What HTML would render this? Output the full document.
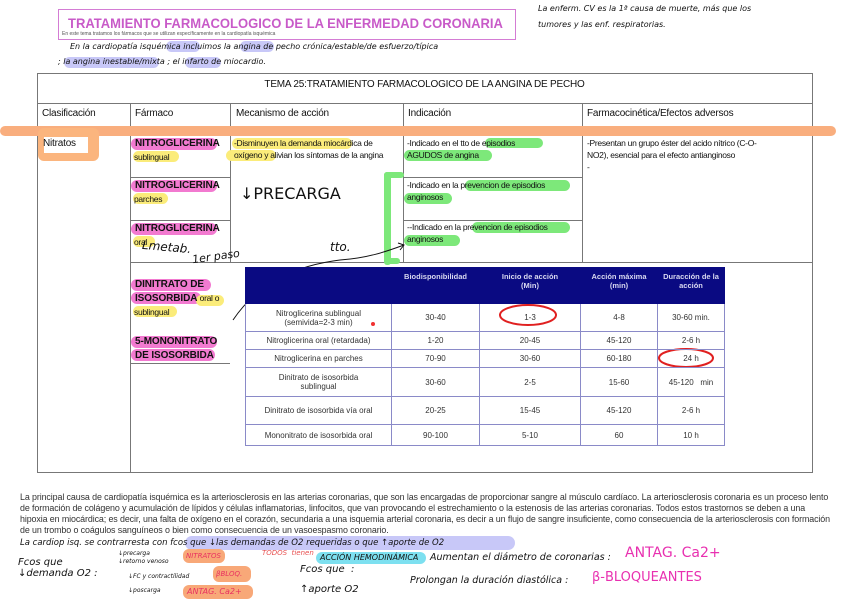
<!DOCTYPE html>
<html><head><meta charset="utf-8"><style>
body{margin:0;width:848px;height:599px;background:#fff;position:relative;overflow:hidden;font-family:"Liberation Sans",sans-serif;}
.a{position:absolute;}
.hw{font-family:"DejaVu Sans",sans-serif;font-style:italic;color:#111;}
.hl{position:absolute;border-radius:6px;}
.c{font-family:"Liberation Sans",sans-serif;font-size:10px;color:#111;letter-spacing:-0.2px;}
.s{font-size:8.5px;letter-spacing:-0.3px;}
.b{font-weight:bold;font-size:10px;letter-spacing:-0.1px;}
table.t{position:absolute;left:245px;top:267px;width:480px;height:178px;border-collapse:collapse;font-size:8px;color:#333;text-align:center;}
table.t td{border:1px solid #8a8ac8;padding:0 2px;}
table.t tr.h td{background:#0a0a82;color:#d8d8f0;font-weight:bold;font-size:7.5px;vertical-align:top;padding-top:4px;border-color:#0a0a82;}
</style></head><body>
<div class="a" style="left:58px;top:9px;width:456px;height:29px;border:1.5px solid #d47cd4;"></div>
<div class="a" style="left:68px;top:15px;font-size:14px;font-weight:bold;color:#c85ac8;transform:scaleX(0.93);transform-origin:left;white-space:nowrap;">TRATAMIENTO FARMACOLOGICO DE LA ENFERMEDAD CORONARIA</div>
<div class="a" style="left:62px;top:31px;font-size:5px;color:#555;">En este tema tratamos los fármacos que se utilizan específicamente en la cardiopatía isquémica</div>
<div class="a hw" style="left:538px;top:4px;font-size:8px;">La enferm. CV es la 1ª causa de muerte, más que los</div>
<div class="a hw" style="left:538px;top:20px;font-size:8px;">tumores y las enf. respiratorias.</div>
<div class="hl" style="left:166px;top:41px;width:34px;height:11px;background:#c8c8f8;"></div>
<div class="hl" style="left:240px;top:41px;width:34px;height:11px;background:#c8c8f8;"></div>
<div class="hl" style="left:64px;top:57px;width:95px;height:11px;background:#c8c8f8;"></div>
<div class="hl" style="left:185px;top:57px;width:36px;height:11px;background:#c8c8f8;"></div>
<div class="a hw" style="left:70px;top:42px;font-size:8px;">En la cardiopatía isquémica incluimos la angina de pecho crónica/estable/de esfuerzo/típica</div>
<div class="a hw" style="left:58px;top:57px;font-size:8px;">; la angina inestable/mixta ; el infarto de miocardio.</div>

<div class="a" style="left:37px;top:73px;width:774px;height:398px;border:1px solid #777;"></div>
<div class="a" style="left:37px;top:103px;width:775px;height:1px;background:#777;"></div>
<div class="a c" style="left:37px;top:79px;width:775px;text-align:center;">TEMA 25:TRATAMIENTO FARMACOLOGICO DE LA ANGINA DE PECHO</div>
<div class="a" style="left:130px;top:103px;width:1px;height:369px;background:#777;"></div>
<div class="a" style="left:230px;top:103px;width:1px;height:160px;background:#777;"></div>
<div class="a" style="left:403px;top:103px;width:1px;height:160px;background:#777;"></div>
<div class="a" style="left:582px;top:103px;width:1px;height:160px;background:#777;"></div>
<div class="a" style="left:230px;top:262px;width:582px;height:1px;background:#777;"></div>
<div class="a" style="left:130px;top:177px;width:100px;height:1px;background:#777;"></div>
<div class="a" style="left:130px;top:220px;width:100px;height:1px;background:#777;"></div>
<div class="a" style="left:130px;top:262px;width:100px;height:1px;background:#777;"></div>
<div class="a" style="left:130px;top:363px;width:100px;height:1px;background:#777;"></div>
<div class="a" style="left:403px;top:177px;width:179px;height:1px;background:#777;"></div>
<div class="a" style="left:403px;top:220px;width:179px;height:1px;background:#777;"></div>
<div class="a c" style="left:42px;top:108px;">Clasificación</div>
<div class="a c" style="left:135px;top:108px;">Fármaco</div>
<div class="a c" style="left:236px;top:108px;">Mecanismo de acción</div>
<div class="a c" style="left:408px;top:108px;">Indicación</div>
<div class="a c" style="left:587px;top:108px;">Farmacocinética/Efectos adversos</div>
<div class="a" style="left:0;top:126px;width:836px;height:10px;background:#f9ae7e;border-radius:5px;"></div>
<div class="a" style="left:38px;top:128px;width:61px;height:33px;background:#fbb57e;border-radius:6px;"></div>
<div class="a" style="left:44px;top:137px;width:44px;height:16px;background:#fff;"></div>
<div class="a c" style="left:43px;top:138px;">Nitratos</div>

<div class="hl" style="left:131px;top:138px;width:86px;height:12px;background:#f27ad0;"></div>
<div class="hl" style="left:133px;top:151px;width:46px;height:11px;background:#fbec7a;"></div>
<div class="a c b" style="left:135px;top:138px;">NITROGLICERINA</div>
<div class="a c s" style="left:134px;top:152px;">sublingual</div>
<div class="hl" style="left:131px;top:180px;width:86px;height:12px;background:#f27ad0;"></div>
<div class="hl" style="left:133px;top:193px;width:35px;height:11px;background:#fbec7a;"></div>
<div class="a c b" style="left:135px;top:180px;">NITROGLICERINA</div>
<div class="a c s" style="left:134px;top:194px;">parches</div>
<div class="hl" style="left:131px;top:223px;width:86px;height:12px;background:#f27ad0;"></div>
<div class="hl" style="left:133px;top:236px;width:22px;height:11px;background:#fbec7a;"></div>
<div class="a c b" style="left:135px;top:223px;">NITROGLICERINA</div>
<div class="a c s" style="left:134px;top:237px;">oral</div>
<div class="a hw" style="left:142px;top:240px;font-size:12px;transform:rotate(5deg);">Lmetab.</div>
<div class="a hw" style="left:192px;top:250px;font-size:11px;transform:rotate(-8deg);">1er paso</div>
<div class="a hw" style="left:330px;top:240px;font-size:12px;">tto.</div>
<div class="hl" style="left:131px;top:279px;width:80px;height:12px;background:#f27ad0;"></div>
<div class="hl" style="left:131px;top:292px;width:70px;height:12px;background:#f27ad0;"></div>
<div class="hl" style="left:196px;top:295px;width:28px;height:11px;background:#fbec7a;"></div>
<div class="hl" style="left:133px;top:306px;width:44px;height:11px;background:#fbec7a;"></div>
<div class="a c b" style="left:135px;top:279px;">DINITRATO DE</div>
<div class="a c b" style="left:135px;top:293px;">ISOSORBIDA <span class="s" style="font-weight:normal">oral o</span></div>
<div class="a c s" style="left:134px;top:307px;">sublingual</div>
<div class="hl" style="left:131px;top:336px;width:86px;height:12px;background:#f27ad0;"></div>
<div class="hl" style="left:131px;top:349px;width:84px;height:12px;background:#f27ad0;"></div>
<div class="a c b" style="left:135px;top:336px;">5-MONONITRATO</div>
<div class="a c b" style="left:135px;top:350px;">DE ISOSORBIDA</div>

<div class="hl" style="left:232px;top:138px;width:120px;height:11px;background:#fbec7a;"></div>
<div class="hl" style="left:226px;top:150px;width:50px;height:11px;background:#fbec7a;"></div>
<div class="a c s" style="left:234px;top:137px;width:152px;line-height:12px;">-Disminuyen la demanda miocárdica de oxígeno y alivian los síntomas de la angina</div>
<div class="a hw" style="left:240px;top:184px;font-size:16px;font-style:normal;">↓PRECARGA</div>

<div class="hl" style="left:485px;top:138px;width:58px;height:10px;background:#7de87a;"></div>
<div class="hl" style="left:404px;top:150px;width:88px;height:11px;background:#7de87a;"></div>
<div class="a c s" style="left:407px;top:137px;width:140px;line-height:12px;">-Indicado en el tto de episodios AGUDOS de angina</div>
<div class="hl" style="left:465px;top:180px;width:105px;height:11px;background:#7de87a;"></div>
<div class="hl" style="left:404px;top:193px;width:48px;height:11px;background:#7de87a;"></div>
<div class="a c s" style="left:407px;top:179px;width:168px;line-height:12px;">-Indicado en la prevencion de episodios anginosos</div>
<div class="hl" style="left:472px;top:222px;width:98px;height:11px;background:#7de87a;"></div>
<div class="hl" style="left:404px;top:235px;width:56px;height:11px;background:#7de87a;"></div>
<div class="a c s" style="left:407px;top:221px;width:168px;line-height:12px;">--Indicado en la prevencion de episodios anginosos</div>
<div class="a" style="left:384px;top:172px;width:7px;height:93px;background:#7de87a;border-radius:3px;"></div>
<div class="a" style="left:384px;top:172px;width:20px;height:6px;background:#7de87a;border-radius:3px;"></div>
<div class="a" style="left:384px;top:258px;width:16px;height:6px;background:#7de87a;border-radius:3px;"></div>

<div class="a c s" style="left:587px;top:137px;width:190px;line-height:12px;">-Presentan un grupo éster del acido nítrico (C-O-NO2), esencial para el efecto antianginoso<br>-</div>

<svg class="a" style="left:0;top:0" width="848" height="599">
<path d="M233 320 C260 280 300 265 340 260 C370 258 390 250 404 245" stroke="#111" fill="none" stroke-width="1"/>
<path d="M398 243 L404 245 L400 250" stroke="#111" fill="none"/>
<ellipse cx="528" cy="315" rx="28" ry="10" stroke="#e02020" fill="none" stroke-width="2"/>
<ellipse cx="686" cy="358" rx="27" ry="9" stroke="#e02020" fill="none" stroke-width="2"/>
<circle cx="373" cy="324" r="2" fill="#f03030"/>
</svg>

<table class="t">
<tr class="h" style="height:36px"><td style="width:141px"></td><td style="width:83px">Biodisponibilidad</td><td style="width:96px">Inicio de acción<br>(Min)</td><td style="width:72px">Acción máxima<br>(min)</td><td>Duracción de la<br>acción</td></tr>
<tr style="height:28px"><td>Nitroglicerina sublingual<br>(semivida=2-3 min)</td><td>30-40</td><td>1-3</td><td>4-8</td><td>30-60 min.</td></tr>
<tr style="height:18px"><td>Nitroglicerina oral (retardada)</td><td>1-20</td><td>20-45</td><td>45-120</td><td>2-6 h</td></tr>
<tr style="height:18px"><td>Nitroglicerina en parches</td><td>70-90</td><td>30-60</td><td>60-180</td><td>24 h</td></tr>
<tr style="height:29px"><td>Dinitrato de isosorbida<br>sublingual</td><td>30-60</td><td>2-5</td><td>15-60</td><td>45-120 &nbsp; min</td></tr>
<tr style="height:28px"><td>Dinitrato de isosorbida vía oral</td><td>20-25</td><td>15-45</td><td>45-120</td><td>2-6 h</td></tr>
<tr style="height:21px"><td>Mononitrato de isosorbida oral</td><td>90-100</td><td>5-10</td><td>60</td><td>10 h</td></tr>
</table>

<div class="a" style="left:20px;top:492px;width:812px;font-size:8.9px;line-height:11px;color:#333;letter-spacing:-0.1px;">La principal causa de cardiopatía isquémica es la arteriosclerosis en las arterias coronarias, que son las encargadas de proporcionar sangre al músculo cardíaco. La arteriosclerosis coronaria es un proceso lento de formación de colágeno y acumulación de lípidos y células inflamatorias, linfocitos, que van provocando el estrechamiento o la estenosis de las arterias coronarias. Todos estos trastornos se deben a una hipoxia en miocárdica; es decir, una falta de oxígeno en el corazón, secundaria a una isquemia arterial coronaria, es decir a un flujo de sangre insuficiente, como consecuencia de la arteriosclerosis con formación de un trombo o coágulos sanguíneos o bien como consecuencia de un vasoespasmo coronario.</div>

<div class="hl" style="left:185px;top:536px;width:330px;height:14px;background:#c8c8f8;border-radius:7px;"></div>
<div class="a hw" style="left:20px;top:538px;font-size:8.5px;">La cardiop isq. se contrarresta con fcos que ↓las demandas de O2 requeridas o que ↑aporte de O2</div>
<div class="hl" style="left:316px;top:552px;width:110px;height:12px;background:#7de0f0;"></div>
<div class="a hw" style="left:262px;top:549px;font-size:7px;color:#e85050;">TODOS &nbsp;tienen</div>
<div class="a hw" style="left:320px;top:553px;font-size:8px;">ACCIÓN HEMODINÁMICA</div>
<div class="a hw" style="left:18px;top:557px;font-size:10px;">Fcos que<br>↓demanda O2 :</div>
<div class="a hw" style="left:118px;top:550px;font-size:6px;line-height:8px;">↓precarga<br>↓retorno venoso</div>
<div class="a hw" style="left:128px;top:573px;font-size:6px;">↓FC y contractilidad</div>
<div class="a hw" style="left:128px;top:587px;font-size:6px;">↓poscarga</div>
<div class="hl" style="left:183px;top:549px;width:42px;height:14px;background:#f8a878;"></div>
<div class="a hw" style="left:186px;top:552px;font-size:7px;color:#e83060;">NITRATOS</div>
<div class="hl" style="left:213px;top:566px;width:38px;height:16px;background:#f8a878;"></div>
<div class="a hw" style="left:216px;top:570px;font-size:7px;color:#e83060;">βBLOQ.</div>
<div class="hl" style="left:183px;top:585px;width:70px;height:14px;background:#f8a878;"></div>
<div class="a hw" style="left:187px;top:587px;font-size:8px;color:#e83060;">ANTAG. Ca2+</div>
<div class="a hw" style="left:300px;top:560px;font-size:10px;line-height:20px;">Fcos que &nbsp;:<br>↑aporte O2</div>
<div class="a hw" style="left:430px;top:552px;font-size:9.5px;">Aumentan el diámetro de coronarias :</div>
<div class="a hw" style="left:410px;top:575px;font-size:9.5px;">Prolongan la duración diastólica :</div>
<div class="a hw" style="left:625px;top:545px;font-size:14px;color:#e830b0;font-style:normal;">ANTAG. Ca2+</div>
<div class="a hw" style="left:592px;top:570px;font-size:13px;color:#e830b0;font-style:normal;">β-BLOQUEANTES</div>
</body></html>
